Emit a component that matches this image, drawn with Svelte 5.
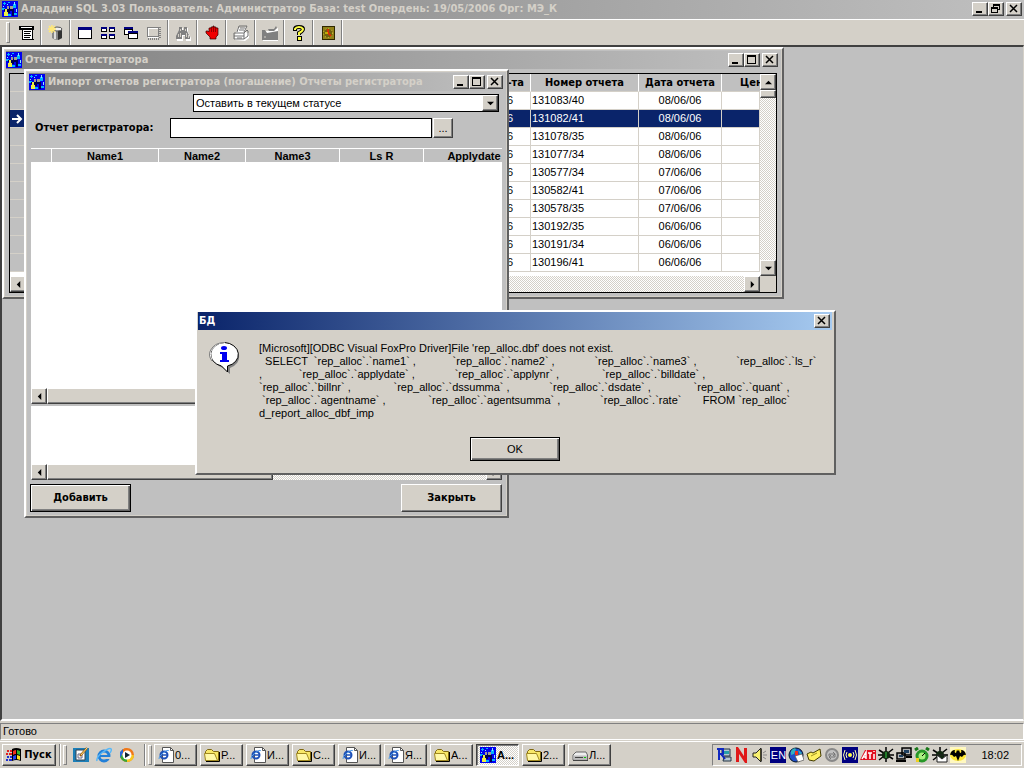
<script>
	// rows of the registrar reports grid
	const reports = [
		{ number: '131083/40', date: '08/06/06' },
		{ number: '131082/41', date: '08/06/06' },
		{ number: '131078/35', date: '08/06/06' },
		{ number: '131077/34', date: '08/06/06' },
		{ number: '130577/34', date: '07/06/06' },
		{ number: '130582/41', date: '07/06/06' },
		{ number: '130578/35', date: '07/06/06' },
		{ number: '130192/35', date: '06/06/06' },
		{ number: '130191/34', date: '06/06/06' },
		{ number: '130196/41', date: '06/06/06' }
	];

	const toolGroups = [
		['list'],
		['base'],
		['window', 'tile', 'cascade', 'layer'],
		['find'],
		['hand'],
		['print'],
		['export'],
		['help'],
		['clock']
	];

	const message = [
		"[Microsoft][ODBC Visual FoxPro Driver]File 'rep_alloc.dbf' does not exist.",
		'  SELECT  `rep_alloc`.`name1` ,            `rep_alloc`.`name2` ,             `rep_alloc`.`name3` ,             `rep_alloc`.`ls_r`',
		',            `rep_alloc`.`applydate` ,             `rep_alloc`.`applynr` ,              `rep_alloc`.`billdate` ,',
		'`rep_alloc`.`billnr` ,              `rep_alloc`.`dssumma` ,             `rep_alloc`.`dsdate` ,              `rep_alloc`.`quant` ,',
		' `rep_alloc`.`agentname` ,              `rep_alloc`.`agentsumma` ,             `rep_alloc`.`rate`       FROM `rep_alloc`',
		'd_report_alloc_dbf_imp'
	].join('\n');

	const tasks = [
		{ icon: 'ie', text: '0...' },
		{ icon: 'folder', text: 'Р...' },
		{ icon: 'ie', text: 'И...' },
		{ icon: 'folder', text: 'С...' },
		{ icon: 'ie', text: 'И...' },
		{ icon: 'ie', text: 'Я...' },
		{ icon: 'folder', text: 'А...' },
		{ icon: 'app', text: 'А...' },
		{ icon: 'folder', text: '2...' },
		{ icon: 'drive', text: 'Л...' }
	];

	const tray = ['remote', 'n', 'sound', 'lang', 'globe', 'note', 'sync', 'wave', 'ati', 'bug', 'net', 'alarm', 'mail', 'bat'];

	let selected = $state(1);
	let activeTask = $state(7);
	let dialogOpen = $state(true);
	let status = $state('Оставить в текущем статусе');
	let fileName = $state('');
</script>

{#snippet icon(name)}
	<svg class="icon" viewBox="0 0 16 16" aria-hidden="true">
		{#if name === 'app'}
			<path fill="#0000f0" d="M0 0h16v16H0z" />
			<path fill="#00b4ff" d="M1 2h3v1H1zM2 1h1v3H2zM6 1h2v1H6zM11 3h3v4h-3zM0 7h3v2H0zM6 13h3v2H6zM10 12h5v2h-5z" />
			<path fill="#8fe8ff" d="M12 1h1v3h-1zM5 3h1v1H5zM1 5h1v1H1zM14 8h1v3h-1z" />
			<path fill="#000050" d="M5 7h3v5H5zM8 8h4v2H8zM2 8h3v2H2zM10 9h2v6h-2z" />
			<path fill="#a0a090" d="M5 5h2v3H5zM8 5h3v3H8z" />
			<path fill="#f0f040" d="M3 8h2v3H3zM2 11h4v4H2z" />
		{:else if name === 'list'}
			<g shape-rendering="crispEdges">
				<path d="M0 1h15v4H0z" /><path fill="#fff" d="M2 2h11v1H2z" />
				<path d="M3 5h11v10H3z" /><path fill="#fff" d="M4 5h9v9H4z" />
				<path d="M5 6h7v1H5zM5 8h6v1H5zM5 10h7v1H5zM5 12h6v1H5zM12 14h3v1h-3z" />
			</g>
		{:else if name === 'base'}
			<path fill="#888" d="M4 4h10v9q-5 4-10 0z" /><path fill="#333" d="M10 5h4v8l-4 2z" />
			<path fill="#ddd" d="M6 6h2v8H6z" /><ellipse cx="9" cy="4" rx="5" ry="2" fill="#eee" stroke="#555" />
			<path stroke="#ffe878" stroke-width="1.500" d="M0 4h8M4 0v8M1 1l6 6M7 1L1 7" />
		{:else if name === 'window'}
			<path shape-rendering="crispEdges" fill="#fff" stroke="#000" d="M1.500 2.500h13v11h-13z" /><path fill="#000080" d="M1 2h14v3H1z" />
		{:else if name === 'tile'}
			{#each [[1, 2], [9, 2], [1, 9], [9, 9]] as [x, y]}
				<rect {x} {y} width="6" height="5" /><rect x={x + 1} y={y + 2} width="4" height="2" fill="#fff" /><rect {x} {y} width="6" height="2" fill="#000080" />
			{/each}
		{:else if name === 'cascade'}
			<path d="M1 2h9v8H1z" /><path fill="#fff" d="M2 5h7v4H2z" /><path fill="#000080" d="M1 2h9v2H1z" />
			<path d="M5 6h10v8H5z" /><path fill="#fff" d="M6 9h8v4H6z" /><path fill="#000080" d="M5 6h10v2H5z" />
		{:else if name === 'layer'}
			<g shape-rendering="crispEdges" fill="none">
				<path stroke="#fff" d="M2 3.500h11M2.500 3v9h9" /><path stroke="#808080" d="M1 2.500h11v9h-11z" />
				<path stroke="#808080" stroke-dasharray="1 1" stroke-width="2" d="M14 2v12M2 14h12" />
			</g>
		{:else if name === 'find'}
			<path fill="#fff" d="M5 3h3v3h2V3h3v4l3 6v3h-5v-5H8v5H2v-3l3-6z" />
			<path fill="#808080" d="M4 2h3v3h2V2h3v4l3 6v2h-5v-4H7v4H1v-3l3-6z" />
			<path fill="#d4d0c8" d="M5 4h1v2H5zM10 4h1v2h-1zM3 9h1v3H3zM5 8h1v4H5zM11 8h1v4h-1zM13 10h1v3h-1z" />
		{:else if name === 'hand'}
			<path fill="#f00000" stroke="#300" stroke-width=".7" d="M5 3h2V2h2V1h1v1h2v1h2v7l-2 2v2H6v-2L2 8V6h2l1 1z" />
			<path stroke="#600" stroke-width=".7" d="M7.500 3v4M9.500 2v5M11.500 3v4" />
		{:else if name === 'print'}
			<path fill="#fff" d="M5 3l8-1-1 5 4 1v5l-4 3-10-1v-5z" />
			<path fill="none" stroke="#707070" d="M4 7l2-6h8l-3 6M7 3h5M6 5h5M1 8h10v6H1zM11 8l3-3 1 1v5l-4 3M1 11h10M4 13h5" />
		{:else if name === 'export'}
			<path fill="#fff" d="M1 6h6l9-3v13H1z" /><path fill="#808080" d="M0 5h3l2 3 11-2v9H0zM6 4h6l2-3 1 2-3 3H7z" />
			<path stroke="#d4d0c8" d="M2 12h2" />
		{:else if name === 'help'}
			<path fill="none" stroke="#000" stroke-width="4" d="M4 6V4q0-2 4-2t4 2q0 2-4 4v2" /><path d="M6 11h5v5H6z" />
			<path fill="none" stroke="#ff4" stroke-width="2" d="M4 5V4q1-2 4-2t4 2q0 2-4 4v2" /><path fill="#ff4" d="M7 12h3v3H7z" />
		{:else if name === 'clock'}
			<path fill="#302800" d="M2 1h13v14H2z" /><path fill="#908018" d="M3 2h11v12H3z" />
			<circle cx="8" cy="8" r="4.500" fill="#706010" stroke="#e0d040" stroke-dasharray="1 2" />
			<path stroke="#f02000" stroke-width="1.500" fill="none" d="M8 4v4l3 3" /><path stroke="#ff0" d="M8 8H5" />
		{:else if name === 'start'}
			<path d="M6 2q4-2 9 0v12q-5-2-9 0z" />
			<path fill="#f03020" d="M7 4q2-1 3-1v4q-2 0-3 1z" /><path fill="#30b030" d="M11 3l3 1v4l-3-1z" />
			<path fill="#2040f0" d="M7 9l3-1v4l-3 1z" /><path fill="#ffe020" d="M11 8l3 1v4l-3-1z" />
			<path fill="#e02020" d="M1 3h2v2H1zM4 3h2v2H4zM0 6h2v2H0zM3 6h3v2H3z" /><path fill="#2030d0" d="M1 9h2v2H1zM4 9h2v2H4zM0 12h2v2H0zM3 12h3v2H3z" />
		{:else if name === 'desktop'}
			<path fill="#1c7fb8" d="M0 1h16v14H0z" /><path fill="#fff" stroke="#345" d="M3 3h9v10H3z" />
			<path fill="none" stroke="#668" d="M5 7h4v4H5z" /><path stroke="#a06010" stroke-width="2" d="M7 9l7-8" /><path stroke="#ffe080" d="M8 8l6-7" />
		{:else if name === 'browser'}
			<circle cx="8" cy="9" r="5" fill="none" stroke="#2380d8" stroke-width="3" />
			<path stroke="#2380d8" stroke-width="2" d="M3 9h11" /><path fill="#d4d0c8" d="M10 10h5v2h-5z" />
			<path fill="none" stroke="#58b8f8" stroke-width="1.500" d="M1 14q-1-4 6-9t8-3q1 1-1 4" />
		{:else if name === 'media'}
			<circle cx="8" cy="8" r="7" fill="#f07818" /><path fill="#f07818" d="M8 1a7 7 0 0 0-7 7h7z" />
			<path fill="#38a838" d="M1 8a7 7 0 0 0 7 7V8z" /><path fill="#f8c820" d="M8 15a7 7 0 0 0 7-7H8z" /><path fill="#2868d8" d="M1 11V5l3-3v4z" />
			<circle cx="8" cy="8" r="4.500" fill="#fff" /><path d="M6 5l5 3-5 3z" fill="#123" />
		{:else if name === 'ie'}
			<path fill="#fff" stroke="#555" d="M4.500.5h8l3 3v12h-11z" /><path fill="none" stroke="#555" d="M12.500.5v3h3" />
			<circle cx="6" cy="8" r="3.500" fill="none" stroke="#1c50b8" stroke-width="2" /><path stroke="#1c50b8" stroke-width="1.500" d="M3 8h7" />
			<path fill="none" stroke="#4898e8" d="M1 12q-1-2 4-6t6-2" />
		{:else if name === 'folder'}
			<path fill="#f8e868" stroke="#806810" d="M1.500 4.500l2-2h4l2 2h5v9h-13z" />
			<path fill="#fff8a8" stroke="#a08820" d="M.5 6.500h10l3 7h-12z" /><path stroke="#000" fill="none" d="M15.500 5v9.500H2" />
		{:else if name === 'drive'}
			<path fill="#eee" stroke="#666" d="M1 8l3-3h10l1.500 3v5H1z" /><path fill="#bbb" d="M1.500 8.500h13.500v4H1.500z" />
			<path stroke="#444" d="M3 10.500h8M1 13.500h15" /><path fill="#0c0" d="M12 10h2v1h-2z" />
		{:else if name === 'remote'}
			<path fill="#b8c8d0" stroke="#234" d="M6 2h8v7H6zM8 10h7v4H7z" /><path fill="#28a0a8" d="M8 4h5v3H8z" />
			<path fill="none" stroke="#1028c0" stroke-width="2" d="M3 13V2h4v5H3M5 7l4 5M1 2h3" />
		{:else if name === 'n'}
			<path fill="none" stroke="#e01818" stroke-width="3" d="M3.500 15V2l8 12V1" />
		{:else if name === 'sound'}
			<path fill="#f8f070" stroke="#222" d="M1 6h3l5-5v14l-5-5H1z" /><path stroke="#000" d="M9 2v12" /><path stroke="#888" d="M11 6l3-2M11 8h4M11 10l3 2" />
		{:else if name === 'globe'}
			<circle cx="8" cy="8" r="7" fill="#2050c8" stroke="#012" /><path fill="#30b0c0" d="M3 4q3-4 5-2l-2 5-3 1zM10 3l4 3-2 2z" />
			<path fill="#fff" stroke="#555" stroke-width=".7" d="M7 9l7-2 2 6-6 2z" /><path fill="#f03018" d="M7 4h3v4H7z" />
		{:else if name === 'note'}
			<path fill="#fff060" stroke="#443c00" d="M1 7l4-2 2 1 7-4 1 7-7 5-5-1z" /><path stroke="#a09020" d="M5 9l6-3" />
		{:else if name === 'sync'}
			<circle cx="8" cy="8" r="6" fill="#c0c0c0" stroke="#888" stroke-width="2" /><path stroke="#777" fill="none" d="M5 9V7h5M11 7v3H6M9 5l2 2-2 2M7 8l-2 2 2 2" />
		{:else if name === 'wave'}
			<path fill="#000080" d="M0 0h16v16H0z" /><circle cx="8" cy="8" r="2" fill="#ff4" />
			<path fill="none" stroke="#ffa" d="M5 5q-2 3 0 6M3 3q-3 5 0 10M11 5q2 3 0 6M13 3q3 5 0 10" />
		{:else if name === 'ati'}
			<path fill="#e01020" d="M0 13L5 3h11v10z" /><path stroke="#fff" stroke-width="1.500" fill="none" d="M2 12l4-7v7M3 10h3M8 6h4M10 6v6M14 4v1M14 7v5" />
		{:else if name === 'bug' || name === 'mail'}
			<path stroke="#000" stroke-width="1.500" d="M1 3l14 9M15 2L1 13M8 0v15M0 8h16" /><ellipse cx="8" cy="8" rx="4" ry="4" fill="#102810" />
			{#if name === 'mail'}
				<path fill="#fff" stroke="#222" d="M5 8h10v7H5zM5 8l5 4 5-4" />
			{:else}
				<path stroke="#30d040" d="M8 5v6" />
			{/if}
		{:else if name === 'net'}
			<path fill="#b0b0b0" stroke="#000" stroke-width="1.500" d="M6 1h9v7H6zM1 6h8v6H1z" /><path fill="#204060" d="M8 3h5v3H8zM3 8h4v2H3z" /><path stroke="#000" stroke-width="2" d="M0 14h10M10 10h6" />
		{:else if name === 'alarm'}
			<circle cx="8" cy="9" r="5" fill="#a8f080" stroke="#289828" stroke-width="3" /><path stroke="#187818" stroke-width="3" d="M1 3l3-2M12 1l3 2" />
			<path stroke="#000" fill="none" d="M8 9l3-3" /><path fill="#f0d020" d="M2 11h3v4H2z" />
		{:else if name === 'bat'}
			<path fill="#fff8c0" d="M0 0h16v16H0z" /><ellipse cx="8" cy="8" rx="8" ry="6" fill="#ffe838" />
			<path d="M0 8q1-5 5-5-1 3 1 3l1-3 1 1 1-1 1 3q2 0 1-3 4 0 5 5-2-1-4 2l-2-1-2 5-2-5-2 1Q2 7 0 8z" />
		{/if}
	</svg>
{/snippet}

{#snippet arrow(dir)}
	<button class="arrow" aria-label={dir}>
		<svg viewBox="0 0 8 8" class={dir} aria-hidden="true"><path d="M4 2l4 4H0z" /></svg>
	</button>
{/snippet}

{#snippet cross()}
	<svg viewBox="0 0 12 10" aria-hidden="true"><path stroke="#000" stroke-width="1.500" d="M2 1l7 7M9 1L2 8" /></svg>
{/snippet}

{#snippet winButtons(restore)}
	<div class="win-buttons">
		<button aria-label="Свернуть"><svg viewBox="0 0 12 10"><path d="M2 7h6v2H2z" /></svg></button>
		<button aria-label="Развернуть">
			<svg viewBox="0 0 12 10" shape-rendering="crispEdges">
				{#if restore}
					<path fill="none" stroke="#000" d="M4 1h6M3.500 3V.5h6v5H8M1.500 3.500h6v5h-6zM1 4.500h7" />
				{:else}
					<path fill="none" stroke="#000" d="M1.500.5h8v8h-8zM1 1.500h9" />
				{/if}
			</svg>
		</button>
		<button class="close" aria-label="Закрыть окно">{@render cross()}</button>
	</div>
{/snippet}

<div class="screen">
	<header class="title main-title">
		{@render icon('app')}
		<h1>Аладдин SQL 3.03 Пользователь: Администратор База: test Опердень: 19/05/2006 Орг: МЭ_К</h1>
		{@render winButtons(true)}
	</header>

	<div class="toolbar">
		<i class="grip"></i>
		{#each toolGroups as group}
			<div class="tool-group">
				{#each group as name}
					<button class="tool" aria-label={name}>{@render icon(name)}</button>
				{/each}
			</div>
		{/each}
	</div>

	<main class="desktop">
		<!-- reports list -->
		<section class="window reports">
			<div class="title">
				{@render icon('app')}
				<h2>Отчеты регистратора</h2>
				{@render winButtons(false)}
			</div>
			<div class="grid-box">
				<div class="grid-top">
					<div class="grid-view">
						<table>
							<colgroup><col class="c-head" /><col class="c-rest" /><col class="c-number" /><col class="c-date" /><col class="c-price" /></colgroup>
							<thead>
								<tr><th></th><th class="rest">-та</th><th>Номер отчета</th><th>Дата отчета</th><th class="price">Цен</th></tr>
							</thead>
							<tbody>
								{#each reports as row, i}
									<tr class:selected={selected === i} onclick={() => (selected = i)}>
										<td class="row-head">
											{#if selected === i}
												<svg viewBox="0 0 12 12" aria-hidden="true"><path fill="none" stroke="#fff" stroke-width="2" d="M1 6h9M6 2l4 4-4 4" /></svg>
											{/if}
										</td>
										<td class="rest">6</td>
										<td>{row.number}</td>
										<td class="date">{row.date}</td>
										<td></td>
									</tr>
								{/each}
							</tbody>
						</table>
					</div>
					<div class="scroll vertical">
						{@render arrow('up')}
						<i class="thumb"></i>
						<i class="track"></i>
						{@render arrow('down')}
					</div>
				</div>
				<div class="scroll with-corner">
					{@render arrow('left')}
					<i class="track"></i>
					{@render arrow('right')}
				</div>
			</div>
		</section>

		<!-- import window -->
		<section class="window import">
			<div class="title">
				{@render icon('app')}
				<h2>Импорт отчетов регистратора (погашение) Отчеты регистратора</h2>
				{@render winButtons(false)}
			</div>
			<div class="import-body">
				<div class="combo">
					<select aria-label="Статус" bind:value={status}>
						<option>Оставить в текущем статусе</option>
					</select>
					{@render arrow('down')}
				</div>
				<div class="file-row">
					<label for="report-file">Отчет регистратора:</label>
					<input id="report-file" type="text" bind:value={fileName} />
					<button class="raised browse">...</button>
				</div>
				<div class="pane upper">
					<table class="names">
						<colgroup><col class="n-head" /><col class="n-1" /><col class="n-2" /><col class="n-3" /><col class="n-4" /><col class="n-5" /></colgroup>
						<thead>
							<tr><th></th><th>Name1</th><th>Name2</th><th>Name3</th><th>Ls R</th><th>Applydate</th></tr>
						</thead>
					</table>
				</div>
				<div class="scroll">
					{@render arrow('left')}
					<i class="thumb"></i>
					<i class="track"></i>
					{@render arrow('right')}
				</div>
				<div class="pane lower"></div>
				<div class="scroll">
					{@render arrow('left')}
					<i class="thumb"></i>
					<i class="track"></i>
					{@render arrow('right')}
				</div>
				<div class="actions">
					<button class="raised default">Добавить</button>
					<button class="raised">Закрыть</button>
				</div>
			</div>
		</section>

		{#if dialogOpen}
			<div class="window dialog" role="alertdialog" aria-labelledby="dialog-title">
				<div class="title">
					<h2 id="dialog-title">БД</h2>
					<div class="win-buttons">
						<button aria-label="Закрыть окно" onclick={() => (dialogOpen = false)}>{@render cross()}</button>
					</div>
				</div>
				<div class="dialog-body">
					<svg class="info" viewBox="0 0 32 32" aria-hidden="true">
						<path fill="#808080" d="M17 3a15 12 0 0 1 4 23v6l-7-6A15 12 0 0 1 17 3z" />
						<path fill="#fff" stroke="#000" d="M15.500.5a15 12 0 0 1 3 23.500v6l-6-6A15 12 0 0 1 15.500.5z" />
						<path fill="none" stroke="#fff" d="M3 18A15 12 0 0 1 15.500.5" />
						<path fill="none" stroke="#808080" d="M3 19A15 12 0 0 1 15.500.5" />
						<ellipse cx="15" cy="6" rx="3" ry="2" fill="#0000f0" /><path fill="#0000f0" d="M11 10h7v8h2v2h-9v-2h2v-6h-2z" />
					</svg>
					<p>{message}</p>
				</div>
				<button class="raised default ok" onclick={() => (dialogOpen = false)}>OK</button>
			</div>
		{/if}
	</main>

	<div class="status"><span>Готово</span></div>

	<footer class="taskbar">
		<button class="raised start">{@render icon('start')}Пуск</button>
		<i class="divider"></i><i class="grip"></i>
		<div class="quick">
			{#each ['desktop', 'browser', 'media'] as name}
				<button class="tool" aria-label={name}>{@render icon(name)}</button>
			{/each}
		</div>
		<i class="divider"></i><i class="grip"></i>
		<div class="tasks">
			{#each tasks as task, i}
				<button class="raised task" class:active={activeTask === i} onclick={() => (activeTask = i)}>{@render icon(task.icon)}{task.text}</button>
			{/each}
		</div>
		<div class="tray">
			{#each tray as name}
				{#if name === 'lang'}
					<span class="lang">EN</span>
				{:else}
					{@render icon(name)}
				{/if}
			{/each}
			<time>18:02</time>
		</div>
	</footer>
</div>

<style>
	:global(body) {
		background: #c0c0c0;
	}

	.screen {
		display: flex;
		flex-direction: column;
		min-height: 100vh;
		font: 11px/13px "Liberation Sans", sans-serif;
		color: #000;
		background: #d4d0c8;
		cursor: default;
	}

	button {
		display: flex;
		align-items: center;
		justify-content: center;
		box-sizing: border-box;
		padding: 0;
		border: 0;
		background: #d4d0c8;
		font: inherit;
		color: inherit;
	}

	i {
		display: block;
		box-sizing: border-box;
	}

	.icon {
		display: block;
		flex: none;
		width: 16px;
		height: 16px;
	}

	/* title bars */
	.title {
		display: flex;
		align-items: center;
		gap: 3px;
		box-sizing: border-box;
		height: 18px;
		padding-right: 2px;
		background: linear-gradient(90deg, #808080, #c0c0c0);
		color: #d4d0c8;
	}

	.main-title {
		height: 19px;
		padding: 0 2px 1px;
	}

	h1,
	h2 {
		flex: 1;
		min-width: 0;
		margin: 0;
		overflow: hidden;
		white-space: nowrap;
		font: bold 11px/16px "DejaVu Sans Condensed", "DejaVu Sans", sans-serif;
	}

	.win-buttons {
		display: flex;
	}

	.win-buttons button {
		width: 16px;
		height: 14px;
	}

	.win-buttons .close {
		margin-left: 2px;
	}

	.win-buttons svg {
		width: 12px;
		height: 10px;
	}

	.win-buttons button,
	.raised,
	.arrow,
	.thumb {
		border: 1px solid;
		border-color: #fff #404040 #404040 #fff;
		box-shadow: inset -1px -1px #808080;
		background: #d4d0c8;
	}

	/* toolbar */
	.toolbar {
		display: flex;
		box-sizing: border-box;
		height: 26px;
		padding-left: 4px;
		border-top: 1px solid #fff;
	}

	.grip {
		flex: none;
		width: 4px;
		margin: 2px;
		border: 1px solid;
		border-color: #fff #808080 #808080 #fff;
	}

	.tool-group {
		display: flex;
		align-items: center;
		padding: 0 2px 0 3px;
		border-right: 1px solid #808080;
		box-shadow: 1px 0 #fff;
	}

	.tool {
		width: 23px;
		height: 22px;
		background: none;
	}

	/* MDI area */
	.desktop {
		position: relative;
		flex: 1;
		min-height: 480px;
		overflow: hidden;
		border: 2px solid;
		border-color: #404040 #d4d0c8 #fff #404040;
		border-right-width: 1px;
		background: #c0c0c0;
	}

	.window {
		position: absolute;
		box-sizing: border-box;
		padding: 2px;
		border: 2px solid;
		border-color: #fff #606060 #606060 #fff;
		background: #c0c0c0;
		box-shadow: inset 1px 1px #d4d0c8, inset -1px -1px #d4d0c8;
	}

	.reports {
		top: 0;
		left: 0;
		width: 782px;
	}

	.import {
		top: 22px;
		left: 22px;
		width: 485px;
		padding-left: 3px;
	}

	.dialog {
		top: 263px;
		left: 193px;
		width: 641px;
		padding: 0 2px 12px 1px;
		background: #d4d0c8;
		box-shadow: none;
	}

	.dialog .title {
		padding-left: 1px;
		background: linear-gradient(90deg, #0a246a, #a6caf0);
		color: #fff;
	}

	/* reports grid */
	.grid-box {
		margin: 4px 3px 2px;
		border: 1px solid #000;
		background: #fff;
	}

	.grid-top {
		display: flex;
		height: 202px;
	}

	.grid-view {
		flex: 1;
		min-width: 0;
		overflow: hidden;
	}

	table {
		table-layout: fixed;
		width: 100%;
		border-collapse: separate;
		border-spacing: 0;
	}

	th,
	td {
		box-sizing: border-box;
		height: 18px;
		padding: 0 1px;
		overflow: hidden;
		white-space: nowrap;
		border-right: 1px solid #d4d0c8;
		border-bottom: 1px solid #d4d0c8;
	}

	th {
		padding: 0;
		background: #c0c0c0;
		border-color: #fff;
		border-bottom-color: #d4d0c8;
		font-weight: bold;
	}

	.reports th {
		font-family: "DejaVu Sans Condensed", "DejaVu Sans", sans-serif;
	}

	.c-head {
		width: 20px;
	}

	.c-number {
		width: 108px;
	}

	.c-date {
		width: 83px;
	}

	.c-price {
		width: 38px;
	}

	th.rest {
		padding-right: 6px;
		text-align: right;
	}

	td.rest {
		padding-right: 17px;
		text-align: right;
	}

	th.price {
		padding-left: 18px;
		border-right: 0;
		text-align: left;
	}

	.date {
		text-align: center;
	}

	.row-head {
		background: #c0c0c0;
	}

	.row-head svg {
		display: block;
		width: 12px;
		height: 12px;
	}

	.selected td {
		background: #0a246a;
		color: #fff;
	}

	/* scroll bars */
	.scroll {
		display: flex;
		height: 16px;
	}

	.vertical {
		flex-direction: column;
		width: 16px;
		height: auto;
	}

	.with-corner {
		padding-right: 16px;
		background: #d4d0c8;
	}

	.arrow {
		flex: none;
		width: 16px;
		height: 16px;
	}

	.arrow svg {
		width: 7px;
		height: 7px;
	}

	.down {
		transform: rotate(180deg);
	}

	.left {
		transform: rotate(-90deg);
	}

	.right {
		transform: rotate(90deg);
	}

	.track {
		flex: 1;
		background: repeating-conic-gradient(#fff 0 25%, #d4d0c8 0 50%) 0 0 / 2px 2px;
	}

	.thumb {
		width: 226px;
	}

	.vertical .thumb {
		width: 16px;
		height: 8px;
	}

	/* import window */
	.import-body {
		padding: 3px 3px 2px 2px;
	}

	.combo {
		display: flex;
		box-sizing: border-box;
		width: 306px;
		height: 18px;
		margin: 0 3px 0 auto;
		border: 1px solid #000;
		background: #fff;
	}

	select {
		flex: 1;
		min-width: 0;
		padding: 0 2px;
		border: 0;
		appearance: none;
		background: #fff;
		font: 11px/16px "Liberation Sans", sans-serif;
		color: #000;
	}

	.file-row {
		display: flex;
		align-items: center;
		gap: 1px;
		height: 20px;
		margin: 6px 0 10px;
		padding-left: 4px;
	}

	label {
		width: 134px;
		white-space: nowrap;
		font: bold 11px/16px "DejaVu Sans Condensed", "DejaVu Sans", sans-serif;
	}

	input {
		box-sizing: border-box;
		width: 262px;
		height: 20px;
		padding: 0 2px;
		border: 1px solid #000;
		background: #fff;
		font: inherit;
	}

	.browse {
		width: 20px;
		height: 20px;
	}

	.pane {
		background: #fff;
		overflow: hidden;
	}

	.upper {
		height: 240px;
	}

	.lower {
		height: 58px;
		margin-top: 2px;
	}

	.names {
		width: 494px;
	}

	.names th {
		height: 14px;
		padding-top: 1px;
		border-bottom: 0;
		border-top: 1px solid #fff;
		line-height: 12px;
	}

	.n-head {
		width: 21px;
	}

	.n-1 {
		width: 107px;
	}

	.n-2 {
		width: 87px;
	}

	.n-3 {
		width: 94px;
	}

	.n-4 {
		width: 84px;
	}

	.actions {
		display: flex;
		justify-content: space-between;
		margin: 4px 0 0 -1px;
	}

	.actions button {
		width: 101px;
		height: 28px;
		font: bold 11px/16px "DejaVu Sans Condensed", "DejaVu Sans", sans-serif;
	}

	.default {
		border-color: #000;
		box-shadow: inset 1px 1px #fff, inset -1px -1px #606060, inset -2px -2px #808080;
	}

	/* message box */
	.dialog-body {
		display: flex;
		gap: 18px;
		margin: 12px 0 17px 11px;
	}

	.info {
		flex: none;
		width: 32px;
		height: 32px;
	}

	p {
		margin: 0;
		white-space: pre;
	}

	.ok {
		width: 90px;
		height: 24px;
		margin: 0 auto;
	}

	/* status bar */
	.status {
		padding: 2px 0 1px;
	}

	.status span {
		display: block;
		padding: 1px 2px;
		border: 1px solid;
		border-color: #808080 #fff #fff #808080;
	}

	/* taskbar */
	.taskbar {
		display: flex;
		align-items: center;
		box-sizing: border-box;
		height: 27px;
		padding: 1px 2px;
		border-top: 1px solid #fff;
	}

	.taskbar .grip {
		height: 20px;
	}

	.divider {
		width: 2px;
		height: 22px;
		margin-left: 3px;
		border-left: 1px solid #808080;
		border-right: 1px solid #fff;
	}

	.start {
		width: 54px;
		height: 22px;
		gap: 2px;
		font: bold 11px/16px "DejaVu Sans Condensed", "DejaVu Sans", sans-serif;
	}

	.quick {
		display: flex;
		width: 72px;
	}

	.tasks {
		display: flex;
		flex: 1;
		gap: 3px;
	}

	.task {
		justify-content: flex-start;
		width: 43px;
		height: 22px;
		padding-left: 3px;
		gap: 1px;
		overflow: hidden;
		white-space: nowrap;
	}

	.active {
		border-color: #404040 #fff #fff #404040;
		box-shadow: inset 1px 1px #808080;
		background: repeating-conic-gradient(#fff 0 25%, #d4d0c8 0 50%) 0 0 / 2px 2px;
		font-weight: bold;
	}

	.tray {
		display: flex;
		align-items: center;
		gap: 2px;
		box-sizing: border-box;
		height: 22px;
		padding: 0 12px 0 3px;
		border: 1px solid;
		border-color: #808080 #fff #fff #808080;
	}

	.lang {
		width: 16px;
		background: #000080;
		color: #fff;
		line-height: 16px;
		text-align: center;
	}

	time {
		margin-left: 13px;
	}
</style>
